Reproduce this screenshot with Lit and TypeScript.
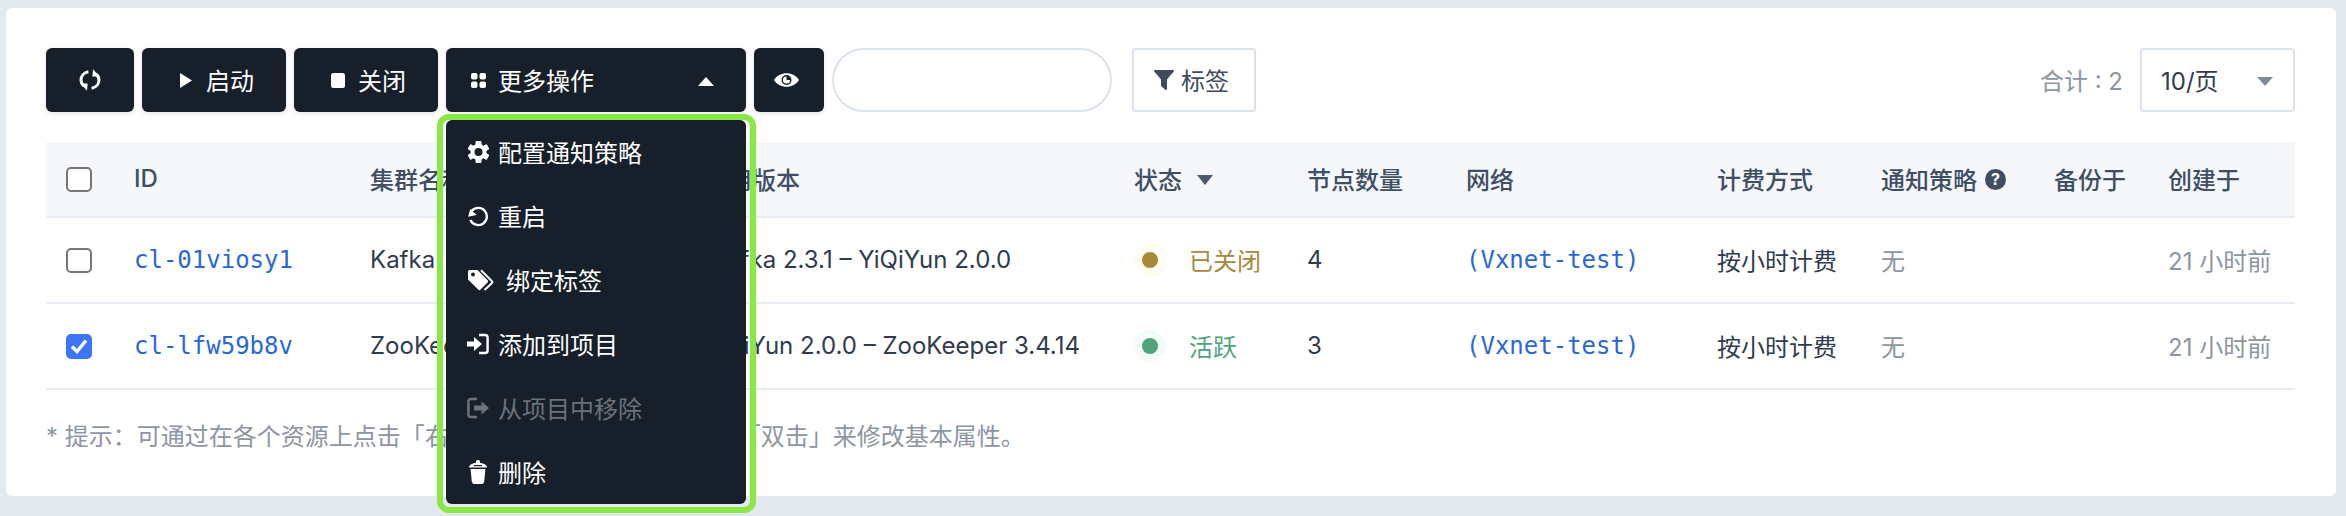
import { LitElement, html, css, svg } from "lit";
import { customElement } from "lit/decorators.js";

const DARK = "#17202a";
const icon = (w: number, h: number, vb: string, body: unknown) =>
  html`<svg class="ic" width=${w} height=${h} viewBox=${vb}>${body}</svg>`;

const syncIcon = icon(22, 22, "0 0 22 22", svg`
  <path d="M9.4 2.8C4.8 3.6 2 7 2 11C2 13.6 3.2 15.6 5.2 17.2" fill="none" stroke="currentColor" stroke-width="3"/>
  <path d="M1.6 14.4H8.6L8 21.8Z" fill="currentColor"/>
  <path d="M12.6 19.2C17.2 18.4 20 15 20 11C20 8.4 18.8 6.4 16.8 4.8" fill="none" stroke="currentColor" stroke-width="3"/>
  <path d="M20.4 7.6H13.4L14 .2Z" fill="currentColor"/>`);
const playIcon = icon(12, 15, "0 0 12 15", svg`<path d="M0 0 12 7.5 0 15Z" fill="currentColor"/>`);
const stopIcon = icon(14, 15, "0 0 14 15", svg`<rect width="14" height="15" rx="2.5" fill="currentColor"/>`);
const gridIcon = icon(15, 15, "0 0 15 15", svg`
  <rect width="6.5" height="6.5" rx="2" fill="currentColor"/>
  <rect x="8.5" width="6.5" height="6.5" rx="2" fill="currentColor"/>
  <rect y="8.5" width="6.5" height="6.5" rx="2" fill="currentColor"/>
  <rect x="8.5" y="8.5" width="6.5" height="6.5" rx="2" fill="currentColor"/>`);
const eyeIcon = icon(25, 14, "0 0 25 14", svg`
  <path d="M0 7C5-2 20-2 25 7 20 16 5 16 0 7Z" fill="currentColor"/>
  <circle cx="12.5" cy="7" r="5" fill=${DARK}/>
  <path d="M12.5 3.4A3.6 3.6 0 1 0 16.1 7H13.4A1 1 0 0 1 12.5 6Z" fill="currentColor"/>`);
const funnelIcon = icon(20, 20, "0 0 20 20", svg`
  <path d="M.8 0H19.2C20 0 20.2 1 19.7 1.6L13 9.4V19C13 20 12 20.2 11.4 19.7L7.6 16.6C7.2 16.3 7 16 7 15.5V9.4L.3 1.6C-.2 1 0 0 .8 0Z" fill="currentColor"/>`);
const gearIcon = icon(21, 22, "0 0 21 22", svg`
  <g fill="currentColor" transform="translate(10.5 11)">
    <circle r="8"/>
    ${[0, 60, 120, 180, 240, 300].map(
      (a) => svg`<rect x="-3" y="-11" width="6" height="6" rx="1" transform=${`rotate(${a})`}/>`
    )}
  </g>
  <circle cx="10.5" cy="11" r="4" fill=${DARK}/>`);
const undoIcon = icon(22, 22, "0 0 22 22", svg`
  <path d="M4.6 6A8.6 8.6 0 1 1 3.4 15" fill="none" stroke="currentColor" stroke-width="2.4"/>
  <path d="M.5 11H9L4 4Z" fill="currentColor" transform="rotate(-12 4 8)"/>`);
const tagsIcon = icon(26, 22, "0 0 26 22", svg`
  <path fill-rule="evenodd" fill="currentColor" d="M1.5 1H9.5L19.6 11.2A1.6 1.6 0 0 1 19.6 13.4L12.5 20.6A1.6 1.6 0 0 1 10.2 20.6L0 10.4V2.5A1.5 1.5 0 0 1 1.5 1ZM5 3.4A2 2 0 1 0 5 7.4 2 2 0 1 0 5 3.4Z"/>
  <path d="M13 1.2 24 12.2Q24.8 13 24 14L16.5 21" fill="none" stroke="currentColor" stroke-width="2"/>`);
const signInIcon = icon(22, 22, "0 0 22 22", svg`
  <path d="M12 2H18A2.6 2.6 0 0 1 20.6 4.6V17.4A2.6 2.6 0 0 1 18 20H12" fill="none" stroke="currentColor" stroke-width="2.4"/>
  <path d="M0 8.4H7V4L15 11 7 18V13.6H0Z" fill="currentColor"/>`);
const signOutIcon = icon(22, 22, "0 0 22 22", svg`
  <path d="M10 2H4A2.6 2.6 0 0 0 1.4 4.6V17.4A2.6 2.6 0 0 0 4 20H10" fill="none" stroke="currentColor" stroke-width="2.4"/>
  <path d="M7 8.6H14.6V4.6L22 11 14.6 17.4V13.4H7Z" fill="currentColor"/>`);
const trashIcon = icon(18, 24, "0 0 18 24", svg`
  <path d="M1.6 9H16.4L15.2 21.4C15 23 13.6 24 12 24H6C4.4 24 3 23 2.8 21.4Z" fill="currentColor"/>
  <path d="M0 7.6C0 4.4 4.4 2.8 9 2.8S18 4.4 18 7.6Z" fill="currentColor"/>
  <rect x="7" y="0" width="4" height="4" rx="1.6" fill="currentColor"/>
  <rect x="5" y="5" width="8" height="1.2" fill=${DARK}/>`);
const checkMark = icon(18, 16, "0 0 18 16", svg`
  <path d="M2 8.5 7 13.5 16 2.5" fill="none" stroke="#fff" stroke-width="3.4"/>`);

interface Row {
  id: string;
  name: string;
  version: string;
  status: string;
  tone: string;
  nodes: string;
  checked: boolean;
  shift: boolean;
}

const rows: Row[] = [
  {
    id: "cl-01viosy1",
    name: "Kafka",
    version: "Kafka 2.3.1 – YiQiYun 2.0.0",
    status: "已关闭",
    tone: "gold",
    nodes: "4",
    checked: false,
    shift: true,
  },
  {
    id: "cl-lfw59b8v",
    name: "ZooKeeper",
    version: "YiQiYun 2.0.0 – ZooKeeper 3.4.14",
    status: "活跃",
    tone: "green",
    nodes: "3",
    checked: true,
    shift: false,
  },
];

const menu = [
  { icon: gearIcon, label: "配置通知策略" },
  { icon: undoIcon, label: "重启" },
  { icon: tagsIcon, label: "绑定标签", wide: true },
  { icon: signInIcon, label: "添加到项目" },
  { icon: signOutIcon, label: "从项目中移除", off: true },
  { icon: trashIcon, label: "删除" },
];

@customElement("app-root")
export class AppRoot extends LitElement {
  static styles = css`
    :host {
      display: block;
      box-sizing: border-box;
      min-height: 516px;
      padding: 8px 10px 20px 6px;
      background: #e4e9f0;
      font-family: "Inter", "Noto Sans CJK SC", sans-serif;
      font-size: 24px;
      color: #2f3b4e;
      overflow: hidden;
    }
    .card {
      background: #fff;
      border-radius: 6px;
      padding: 40px 41px 42px 40px;
    }
    .toolbar {
      display: flex;
      align-items: stretch;
      gap: 8px;
      height: 64px;
      margin-bottom: 30px;
    }
    .ic {
      display: block;
      flex: none;
    }
    .lift {
      padding-bottom: 2px;
    }
    .btn {
      box-sizing: border-box;
      display: flex;
      align-items: center;
      height: 64px;
      background: #17202a;
      color: #fff;
      border-radius: 6px;
      box-shadow: 0 2px 5px rgba(40, 60, 90, 0.12);
    }
    .b-sync {
      width: 88px;
      justify-content: center;
    }
    .b-start {
      width: 144px;
      padding-left: 38px;
      gap: 14px;
    }
    .b-stop {
      width: 144px;
      padding-left: 37px;
      gap: 13px;
    }
    .more-wrap {
      position: relative;
      width: 300px;
    }
    .b-more {
      padding: 0 32px 0 25px;
      gap: 12px;
    }
    .caret-up {
      margin-left: auto;
      margin-top: 2px;
      width: 0;
      height: 0;
      border-left: 8px solid transparent;
      border-right: 8px solid transparent;
      border-bottom: 9px solid #fff;
    }
    .b-eye {
      width: 70px;
      padding-right: 5px;
      justify-content: center;
    }
    .search {
      box-sizing: border-box;
      width: 280px;
      height: 64px;
      border: 2px solid #dbe2ec;
      border-radius: 32px;
      background: #fff;
    }
    .tag-btn {
      box-sizing: border-box;
      display: flex;
      align-items: center;
      gap: 7px;
      height: 64px;
      width: 124px;
      margin-left: 12px;
      padding-left: 20px;
      border: 2px solid #dbe2ec;
      border-radius: 4px;
      color: #3f4c5f;
      background: #fff;
    }
    .total {
      margin-left: auto;
      margin-right: 9px;
      align-self: center;
      color: #8c95a3;
    }
    .select {
      box-sizing: border-box;
      display: flex;
      align-items: center;
      width: 155px;
      height: 64px;
      padding: 0 20px 0 19px;
      border: 2px solid #dbe2ec;
      border-radius: 4px;
      background: #fff;
      color: #2f3b4e;
    }
    .caret-down {
      margin-left: auto;
      margin-top: 2px;
      width: 0;
      height: 0;
      border-left: 8px solid transparent;
      border-right: 8px solid transparent;
      border-top: 9px solid #818b99;
    }
    .frame {
      position: absolute;
      z-index: 2;
      left: -9px;
      top: 66px;
      box-sizing: border-box;
      width: 319px;
      border: 6px solid #8ae846;
      border-radius: 12px;
      padding: 0 4px 3px 3px;
    }
    .menu {
      background: #17202a;
      border-radius: 6px;
      color: #fff;
    }
    .item {
      display: flex;
      align-items: center;
      gap: 9px;
      height: 64px;
      padding-left: 21px;
    }
    .item.wide {
      gap: 12px;
      padding-left: 22px;
    }
    .item.off {
      color: #6c7279;
    }
    .item .slot {
      width: 22px;
      display: flex;
      justify-content: center;
    }
    .item.wide .slot {
      width: 26px;
    }
    .row {
      display: grid;
      grid-template-columns: 88px 236px 334px 430px 173px 159px 251px 164px 173px 114px 127px;
      align-items: center;
      height: 84px;
      border-bottom: 2px solid #e6ebf1;
    }
    .head {
      height: 74px;
      background: #f5f7fb;
      font-weight: 500;
      color: #404e63;
    }
    .check-cell {
      padding-left: 20px;
    }
    .cb {
      box-sizing: border-box;
      display: flex;
      align-items: center;
      justify-content: center;
      width: 26px;
      height: 25px;
      border: 2px solid #767676;
      border-radius: 5px;
      background: #fff;
    }
    .cb.on {
      background: #3b76f6;
      border-color: #3b76f6;
    }
    .mono {
      font-family: "DejaVu Sans Mono", monospace;
      color: #2a67d6;
    }
    .with-icon {
      display: flex;
      align-items: center;
    }
    .sort {
      margin-left: 15px;
      margin-top: 2px;
      width: 0;
      height: 0;
      border-left: 8px solid transparent;
      border-right: 8px solid transparent;
      border-top: 10px solid #4b5a6e;
    }
    .help {
      margin-left: 8px;
      width: 21px;
      height: 21px;
      border-radius: 50%;
      background: #404e63;
      color: #fff;
      font-size: 16px;
      font-weight: 700;
      line-height: 21px;
      text-align: center;
    }
    .status {
      display: flex;
      align-items: center;
      gap: 23px;
    }
    .halo {
      display: flex;
      align-items: center;
      justify-content: center;
      width: 32px;
      height: 32px;
      border-radius: 50%;
    }
    .halo i {
      display: block;
      width: 16px;
      height: 16px;
      border-radius: 50%;
    }
    .gold {
      color: #a6893a;
    }
    .gold .halo {
      background: #fffdf0;
    }
    .gold .halo i {
      background: #a6893a;
    }
    .green {
      color: #4ea57b;
    }
    .green .halo {
      background: #f4fcf8;
    }
    .green .halo i {
      background: #4ea57b;
    }
    .muted {
      color: #8c95a3;
    }
    .nowrap {
      white-space: nowrap;
    }
    .indent {
      padding-left: 7px;
    }
    .note {
      margin-top: 30px;
      line-height: 34px;
      color: #8c95a3;
    }
  `;

  render() {
    return html`
      <div class="card">
        <div class="toolbar">
          <div class="btn b-sync">${syncIcon}</div>
          <div class="btn b-start">${playIcon}<span class="lift">启动</span></div>
          <div class="btn b-stop">${stopIcon}<span class="lift">关闭</span></div>
          <div class="more-wrap">
            <div class="btn b-more">${gridIcon}<span class="lift">更多操作</span><span class="caret-up"></span></div>
            <div class="frame">
              <div class="menu">
                ${menu.map(
                  (m) => html`<div class="item ${m.wide ? "wide" : ""} ${m.off ? "off" : ""}">
                    <span class="slot">${m.icon}</span><span class="lift">${m.label}</span>
                  </div>`
                )}
              </div>
            </div>
          </div>
          <div class="btn b-eye">${eyeIcon}</div>
          <div class="search"></div>
          <div class="tag-btn">${funnelIcon}<span class="lift">标签</span></div>
          <div class="total lift">合计 : 2</div>
          <div class="select"><span class="lift">10/页</span><span class="caret-down"></span></div>
        </div>
        <div class="row head">
          <div class="check-cell"><div class="cb"></div></div>
          <div class="lift">ID</div>
          <div class="lift">集群名称</div>
          <div class="lift">应用版本</div>
          <div class="with-icon"><span class="lift">状态</span><span class="sort"></span></div>
          <div class="lift">节点数量</div>
          <div class="lift">网络</div>
          <div class="lift">计费方式</div>
          <div class="with-icon"><span class="lift">通知策略</span><span class="help">?</span></div>
          <div class="lift">备份于</div>
          <div class="lift">创建于</div>
        </div>
        ${rows.map(
          (r) => html`<div class="row">
            <div class="check-cell"><div class="cb ${r.checked ? "on" : ""}">${r.checked ? checkMark : ""}</div></div>
            <div class="mono">${r.id}</div>
            <div class="lift">${r.name}</div>
            <div class="nowrap lift ${r.shift ? "indent" : ""}">${r.version}</div>
            <div class="status ${r.tone}"><span class="halo"><i></i></span><span class="lift">${r.status}</span></div>
            <div class="lift">${r.nodes}</div>
            <div class="mono">(Vxnet-test)</div>
            <div class="lift">按小时计费</div>
            <div class="muted lift">无</div>
            <div></div>
            <div class="muted lift">21 小时前</div>
          </div>`
        )}
        <div class="note">* 提示：可通过在各个资源上点击「右键」来进行常用操作，以及「双击」来修改基本属性。</div>
      </div>
    `;
  }
}
